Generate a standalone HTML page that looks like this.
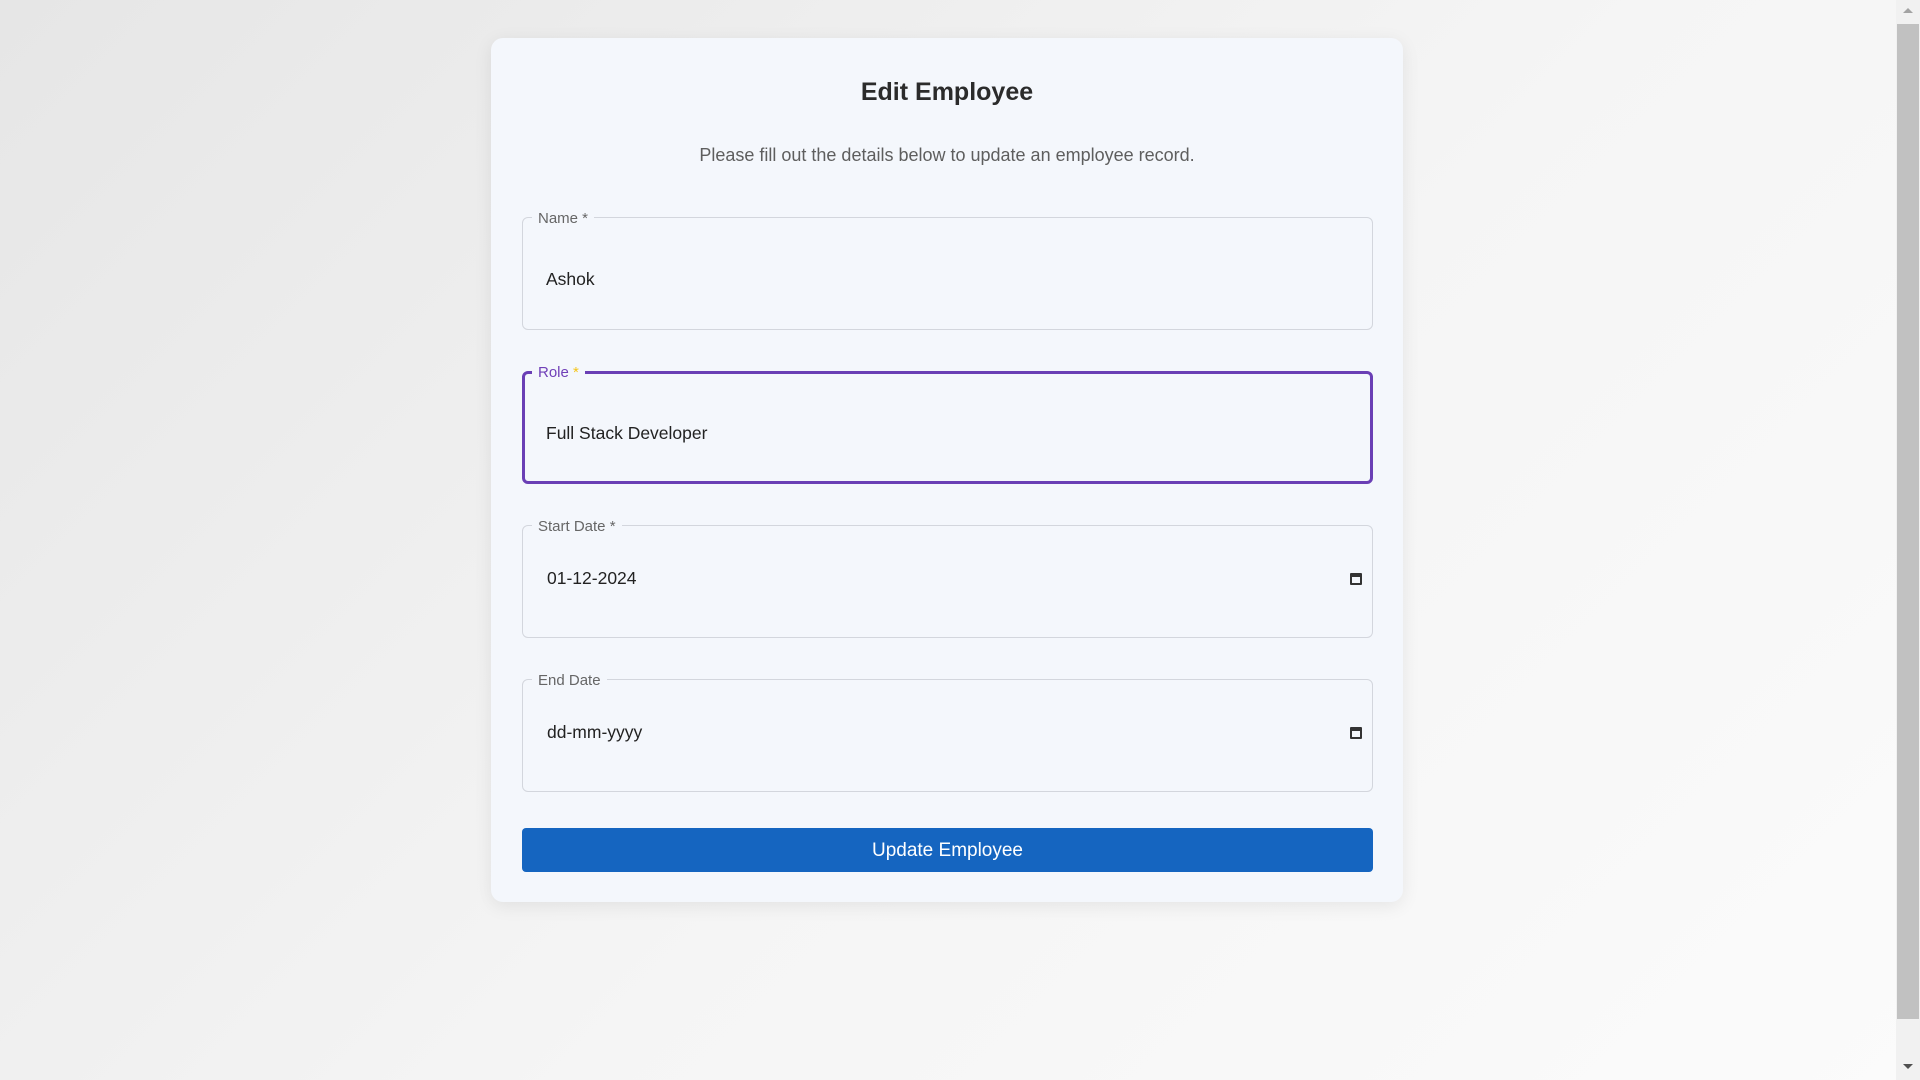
<!DOCTYPE html>
<html><head><meta charset="utf-8"><style>
*{box-sizing:border-box;margin:0;padding:0}
html,body{width:1920px;height:1080px;overflow:hidden}
body{background:linear-gradient(135deg,#e6e6e6 0%,#f5f5f5 55%,#fbfbfb 100%);font-family:"Liberation Sans",sans-serif;position:relative}
.card{position:absolute;left:491px;top:38px;width:912px;height:864px;background:#f4f7fc;border-radius:12px;box-shadow:0 4px 18px rgba(0,0,0,0.08)}
h1{position:absolute;left:0;right:0;top:78px;text-align:center;font-size:25px;font-weight:bold;color:#2b2b2b}
.sub{position:absolute;left:0;right:0;top:145px;text-align:center;font-size:18px;color:#5e5e5e}
.f{position:absolute;left:522px;width:851px;height:113px;border:1px solid #d3d6dd;border-radius:6px}
.f.focus{border:3px solid #6a3fb5}
.lab{position:absolute;left:9px;top:-8px;background:#f4f7fc;padding:0 6px;font-size:15px;color:#666;line-height:18px}
.focus .lab{left:7px;top:-10px;color:#7040b8}
.val{position:absolute;left:23px;top:51px;font-size:17.5px;color:#222}
.focus .val{left:21px;top:49px}
.f .val.d{left:24px;top:42px}
.cal{position:absolute;right:10px;top:47px;width:12px;height:12px;border:2px solid #333;border-top-width:4px;border-radius:1px}
.btn{position:absolute;left:522px;top:828px;width:851px;height:44px;background:#1565c0;border-radius:4px;color:#fff;font-size:19px;text-align:center;line-height:46px}
.sb{position:absolute;right:0;top:0;width:24px;height:1080px;background:#f1f1f1}
.thumb{position:absolute;right:1px;top:24px;width:22px;height:995px;background:#c1c1c1}
</style></head><body>
<div class="card"></div>
<div style="position:absolute;left:491px;top:0;width:912px">
<h1>Edit Employee</h1>
<div class="sub">Please fill out the details below to update an employee record.</div>
</div>
<div class="f" style="top:217px"><span class="lab">Name *</span><span class="val">Ashok</span></div>
<div class="f focus" style="top:371px"><span class="lab">Role <span style="color:#f5c518">*</span></span><span class="val">Full Stack Developer</span></div>
<div class="f" style="top:525px"><span class="lab">Start Date *</span><span class="val d">01-12-2024</span><span class="cal"></span></div>
<div class="f" style="top:679px"><span class="lab">End Date</span><span class="val d">dd-mm-yyyy</span><span class="cal"></span></div>
<div class="btn">Update Employee</div>
<div class="sb"><div class="thumb"></div>
<div style="position:absolute;left:7px;top:8px;width:0;height:0;border-left:5px solid transparent;border-right:5px solid transparent;border-bottom:5px solid #a3a3a3"></div>
<div style="position:absolute;left:7px;top:1064px;width:0;height:0;border-left:5px solid transparent;border-right:5px solid transparent;border-top:5px solid #505050"></div>
</div>
</body></html>
